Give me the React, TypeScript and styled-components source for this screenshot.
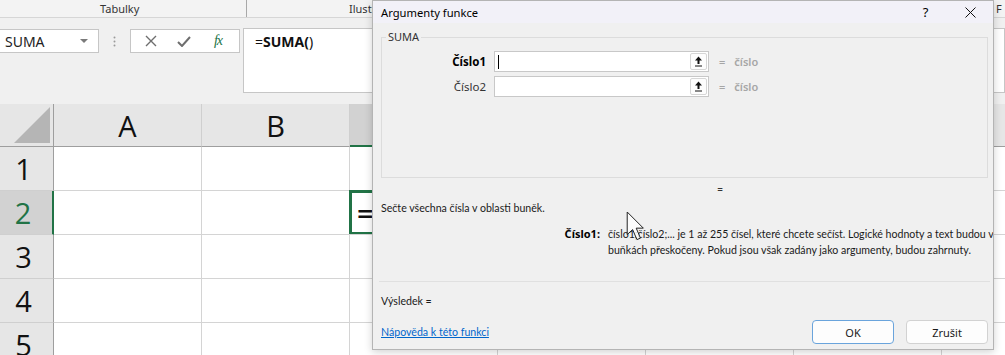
import React from 'react';
import styled, { createGlobalStyle } from 'styled-components';

const GlobalStyle = createGlobalStyle`
  html, body {
    margin: 0;
    padding: 0;
    background: #fff;
    overflow: hidden;
  }
  body {
    font-family: "Noto Sans", "Open Sans", sans-serif;
  }
`;

const Screen = styled.div`
  position: relative;
  width: 1005px;
  height: 355px;
  overflow: hidden;
  background: #fff;
`;

const Sheet = styled.div`
  display: flex;
  flex-direction: column;
  width: 1005px;
`;

const RibbonLabels = styled.div`
  height: 17px;
  background: #f3f3f3;
  border-bottom: 1px solid #d6d6d6;
  display: flex;
  align-items: center;
  font-size: 11px;
  color: #333;
`;

const RibbonGroup = styled.div<{ $w: number; $pad?: number; $sep?: boolean }>`
  width: ${p => p.$w}px;
  flex-shrink: 0;
  box-sizing: border-box;
  padding-left: ${p => p.$pad ?? 0}px;
  border-right: ${p => (p.$sep ? '1px solid #a8a8a8' : 'none')};
  line-height: 17px;
  white-space: nowrap;
  overflow: hidden;
`;

const FormulaArea = styled.div`
  height: 86px;
  box-sizing: border-box;
  padding-top: 11px;
  background: #f0f0f0;
  display: flex;
  align-items: flex-start;
`;

const NameBox = styled.div`
  margin-left: -1px;
  width: 100px;
  height: 24px;
  box-sizing: border-box;
  background: #fff;
  border: 1px solid #c6c6c6;
  display: flex;
  align-items: center;
  justify-content: space-between;
  padding: 0 10px 0 5px;
  font-size: 14px;
  color: #222;
`;

const Caret = styled.span`
  width: 0;
  height: 0;
  border-left: 4px solid transparent;
  border-right: 4px solid transparent;
  border-top: 4px solid #7a7a7a;
`;

const Grip = styled.div`
  width: 31px;
  height: 24px;
  display: flex;
  align-items: center;
  justify-content: center;
`;

const EditButtons = styled.div`
  width: 110px;
  height: 24px;
  box-sizing: border-box;
  background: #fff;
  border: 1px solid #c6c6c6;
  display: grid;
  grid-template-columns: 39px 27px 42px;
  align-items: center;
  justify-items: center;
`;

const Fx = styled.span`
  font-family: "Liberation Serif", serif;
  font-style: italic;
  font-size: 14px;
  color: #217346;
  letter-spacing: -1px;
`;

const FormulaBox = styled.div`
  flex: 1;
  margin: -1px 0 0 3px;
  height: 65px;
  box-sizing: border-box;
  background: #fff;
  border: 1px solid #c6c6c6;
  padding: 3px 0 0 11px;
  font-size: 14px;
  color: #111;
`;

const Grid = styled.div`
  display: grid;
  grid-template-columns: 54px repeat(7, 148px);
  grid-template-rows: 43px repeat(5, 44px);
`;

const Corner = styled.div`
  background: #e6e6e6;
  border-right: 1px solid #9e9e9e;
  border-bottom: 1px solid #9e9e9e;
  display: flex;
  align-items: flex-end;
  justify-content: flex-end;
  padding: 0 3px 3px 0;
`;

const ColHead = styled.div<{ $sel?: boolean }>`
  background: ${p => (p.$sel ? '#d2d2d2' : '#e6e6e6')};
  border-right: 1px solid #cfcfcf;
  border-bottom: ${p => (p.$sel ? '2px solid #217346' : '1px solid #9e9e9e')};
  display: flex;
  align-items: center;
  justify-content: center;
  font-family: "Open Sans", sans-serif;
  font-size: 29px;
  color: #111;
`;

const RowHead = styled.div<{ $sel?: boolean }>`
  background: ${p => (p.$sel ? '#d2d2d2' : '#e6e6e6')};
  border-bottom: 1px solid #cfcfcf;
  border-right: ${p => (p.$sel ? '2px solid #217346' : '1px solid #9e9e9e')};
  display: flex;
  align-items: center;
  justify-content: center;
  padding-right: 6px;
  font-family: "Open Sans", sans-serif;
  font-size: 29px;
  color: ${p => (p.$sel ? '#217346' : '#111')};
`;

const Cell = styled.div<{ $active?: boolean }>`
  border-right: 1px solid #d4d4d4;
  border-bottom: 1px solid #d4d4d4;
  box-shadow: ${p => (p.$active ? '-1px -1px 0 0 #217346, inset 0 0 0 2px #217346' : 'none')};
  display: flex;
  align-items: center;
  padding-left: 7px;
  font-family: "Open Sans", sans-serif;
  font-size: 29px;
  font-weight: 600;
  color: #111;
`;

const Dialog = styled.div`
  position: absolute;
  left: 372px;
  top: 0;
  width: 622px;
  height: 350px;
  box-sizing: border-box;
  overflow: hidden;
  border: 1px solid #b4b4b4;
  box-shadow: 0 2px 8px rgba(0, 0, 0, 0.18);
  background: #f0f0f0;
  display: flex;
  flex-direction: column;
  font-family: Lato, "Noto Sans", sans-serif;
  font-size: 10.6px;
  color: #1a1a1a;
`;

const TitleBar = styled.div`
  height: 22px;
  background: #f2f1f8;
  display: flex;
  align-items: center;
  padding-left: 8px;
  font-family: "Noto Sans", sans-serif;
  font-size: 11.2px;
  color: #000;
`;

const TitleText = styled.div`
  flex: 1;
`;

const TitleButton = styled.div`
  width: 45px;
  height: 22px;
  display: flex;
  align-items: center;
  justify-content: center;
  font-size: 13px;
`;

const Body = styled.div`
  flex: 1;
  min-width: 0;
  display: flex;
  flex-direction: column;
  padding: 0 5px 0 8px;
`;

const GroupBox = styled.fieldset`
  margin: 7px 0 0;
  padding: 7px 0 0;
  height: 148px;
  box-sizing: border-box;
  border: 1px solid #dcdcdc;
  min-width: 0;
`;

const Legend = styled.legend`
  margin-left: 4px;
  padding: 0 2px;
  font-family: "Noto Sans", sans-serif;
  font-size: 11px;
  line-height: 14px;
  color: #333;
`;

const ArgRows = styled.div`
  display: grid;
  grid-template-columns: 104px 215px auto;
  grid-auto-rows: 21px;
  row-gap: 4px;
  column-gap: 8px;
  align-items: center;
`;

const ArgLabel = styled.div<{ $bold?: boolean }>`
  text-align: right;
  font-family: "Noto Sans", sans-serif;
  font-size: 11.5px;
  font-weight: ${p => (p.$bold ? 700 : 400)};
  color: ${p => (p.$bold ? '#000' : '#333')};
`;

const ArgInput = styled.div`
  height: 21px;
  box-sizing: border-box;
  background: #fff;
  border: 1px solid #c8c8c8;
  display: flex;
  align-items: center;
  justify-content: space-between;
  padding: 0 1px 0 3px;
`;

const TextCaret = styled.span`
  width: 1px;
  height: 14px;
  background: #000;
`;

const RefButton = styled.div`
  width: 17px;
  height: 17px;
  box-sizing: border-box;
  background: #fdfdfd;
  border: 1px solid #d6d6d6;
  border-radius: 2px;
  display: flex;
  align-items: center;
  justify-content: center;
`;

const ArgValue = styled.div`
  display: flex;
  gap: 9px;
  padding-left: 2px;
  font-family: "Noto Sans", sans-serif;
  font-size: 11px;
  font-weight: 600;
  color: #a6a6a6;
`;

const CenterEq = styled.div`
  margin-top: 4px;
  padding-left: 336px;
  line-height: 14px;
  color: #333;
`;

const Description = styled.div`
  margin-top: 5px;
  line-height: 14px;
`;

const ArgHelp = styled.div`
  margin-top: 11px;
  display: grid;
  grid-template-columns: 219px minmax(0, 1fr);
  column-gap: 8px;
  line-height: 16px;
  white-space: nowrap;
`;

const ArgHelpLabel = styled.div`
  text-align: right;
  font-family: "Noto Sans", sans-serif;
  font-size: 11px;
  font-weight: 700;
  color: #000;
`;

const Separator = styled.div`
  margin: 23px -2px 0 -2px;
  border-top: 1px solid #e0e0e0;
`;

const Result = styled.div`
  margin-top: 12px;
  line-height: 14px;
`;

const Footer = styled.div`
  margin-top: 12px;
  display: flex;
  align-items: center;
  gap: 12px;
`;

const HelpLink = styled.a`
  flex: 1;
  color: #0066cc;
  text-decoration: underline;
`;

const Button = styled.button<{ $primary?: boolean }>`
  width: 82px;
  height: 24px;
  flex-shrink: 0;
  box-sizing: border-box;
  background: #fdfdfd;
  border: 1px solid ${p => (p.$primary ? '#6aa4dc' : '#d2d2d2')};
  border-radius: 4px;
  font-family: "Noto Sans", sans-serif;
  font-size: 11px;
  color: #1a1a1a;
  padding: 0;
`;

const Pointer = styled.svg`
  position: absolute;
  left: 626px;
  top: 211px;
`;

const columns = ['A', 'B', 'C', 'D', 'E', 'F', 'G'];
const rows = [1, 2, 3, 4, 5];

const RefIcon = () => (
  <svg width="9" height="11" viewBox="0 0 9 11">
    <path d="M4.5 0.5 L1 4.5 H3.5 V8 H5.5 V4.5 H8 Z" fill="#111" />
    <path d="M1 10 H8" stroke="#111" strokeWidth="1" />
  </svg>
);

const App: React.FC = () => {
  return (
    <Screen>
      <GlobalStyle />
      <Sheet>
        <RibbonLabels>
          <RibbonGroup $w={247} $pad={100} $sep>
            Tabulky
          </RibbonGroup>
          <RibbonGroup $w={125} $pad={102}>
            Ilustrace
          </RibbonGroup>
          <RibbonGroup $w={624} />
          <RibbonGroup $w={9}>F</RibbonGroup>
        </RibbonLabels>

        <FormulaArea>
          <NameBox>
            SUMA
            <Caret />
          </NameBox>
          <Grip>
            <svg width="3" height="11" viewBox="0 0 3 11">
              <circle cx="1.5" cy="1.5" r="1" fill="#9a9a9a" />
              <circle cx="1.5" cy="5.5" r="1" fill="#9a9a9a" />
              <circle cx="1.5" cy="9.5" r="1" fill="#9a9a9a" />
            </svg>
          </Grip>
          <EditButtons>
            <svg width="12" height="12" viewBox="0 0 12 12">
              <path d="M1 1 L11 11 M11 1 L1 11" stroke="#6e6e6e" strokeWidth="1.4" />
            </svg>
            <svg width="14" height="11" viewBox="0 0 14 11">
              <path d="M1 6 L5 10 L13 1" stroke="#6e6e6e" strokeWidth="2" fill="none" />
            </svg>
            <Fx>fx</Fx>
          </EditButtons>
          <FormulaBox>
            =<b>SUMA(</b>)
          </FormulaBox>
        </FormulaArea>

        <Grid>
          <Corner>
            <svg width="36" height="36" viewBox="0 0 36 36">
              <path d="M36 0 L36 36 L0 36 Z" fill="#b5b5b5" />
            </svg>
          </Corner>
          {columns.map(c => (
            <ColHead key={c} $sel={c === 'C'}>
              {c === 'A' || c === 'B' ? c : ''}
            </ColHead>
          ))}
          {rows.map(r => (
            <React.Fragment key={r}>
              <RowHead $sel={r === 2}>{r}</RowHead>
              {columns.map(c => (
                <Cell key={c} $active={r === 2 && c === 'C'}>
                  {r === 2 && c === 'C' ? '=' : ''}
                </Cell>
              ))}
            </React.Fragment>
          ))}
        </Grid>
      </Sheet>

      <Dialog>
        <TitleBar>
          <TitleText>Argumenty funkce</TitleText>
          <TitleButton>?</TitleButton>
          <TitleButton>
            <svg width="11" height="11" viewBox="0 0 11 11">
              <path d="M0.5 0.5 L10.5 10.5 M10.5 0.5 L0.5 10.5" stroke="#111" strokeWidth="1" />
            </svg>
          </TitleButton>
        </TitleBar>
        <Body>
          <GroupBox>
            <Legend>SUMA</Legend>
            <ArgRows>
              <ArgLabel $bold>Číslo1</ArgLabel>
              <ArgInput>
                <TextCaret />
                <RefButton>
                  <RefIcon />
                </RefButton>
              </ArgInput>
              <ArgValue>
                <span>=</span>
                <span>číslo</span>
              </ArgValue>
              <ArgLabel>Číslo2</ArgLabel>
              <ArgInput>
                <span />
                <RefButton>
                  <RefIcon />
                </RefButton>
              </ArgInput>
              <ArgValue>
                <span>=</span>
                <span>číslo</span>
              </ArgValue>
            </ArgRows>
          </GroupBox>

          <CenterEq>=</CenterEq>
          <Description>Sečte všechna čísla v oblasti buněk.</Description>
          <ArgHelp>
            <ArgHelpLabel>Číslo1:</ArgHelpLabel>
            <div>
              číslo1;číslo2;... je 1 až 255 čísel, které chcete sečíst. Logické hodnoty a text budou v
              <br />
              buňkách přeskočeny. Pokud jsou však zadány jako argumenty, budou zahrnuty.
            </div>
          </ArgHelp>
          <Separator />
          <Result>Výsledek =</Result>
          <Footer>
            <HelpLink href="#">Nápověda k této funkci</HelpLink>
            <Button $primary>OK</Button>
            <Button>Zrušit</Button>
          </Footer>
        </Body>
      </Dialog>

      <Pointer width="19" height="30" viewBox="0 0 13 21">
        <path
          d="M0.7 0.7 L0.7 16.5 L4.5 13 L7.5 20 L10 19 L7 12 L12 12 Z"
          fill="#fff"
          fillOpacity="0.8"
          stroke="#222"
          strokeWidth="0.7"
          strokeLinejoin="round"
        />
      </Pointer>
    </Screen>
  );
};

export default App;
